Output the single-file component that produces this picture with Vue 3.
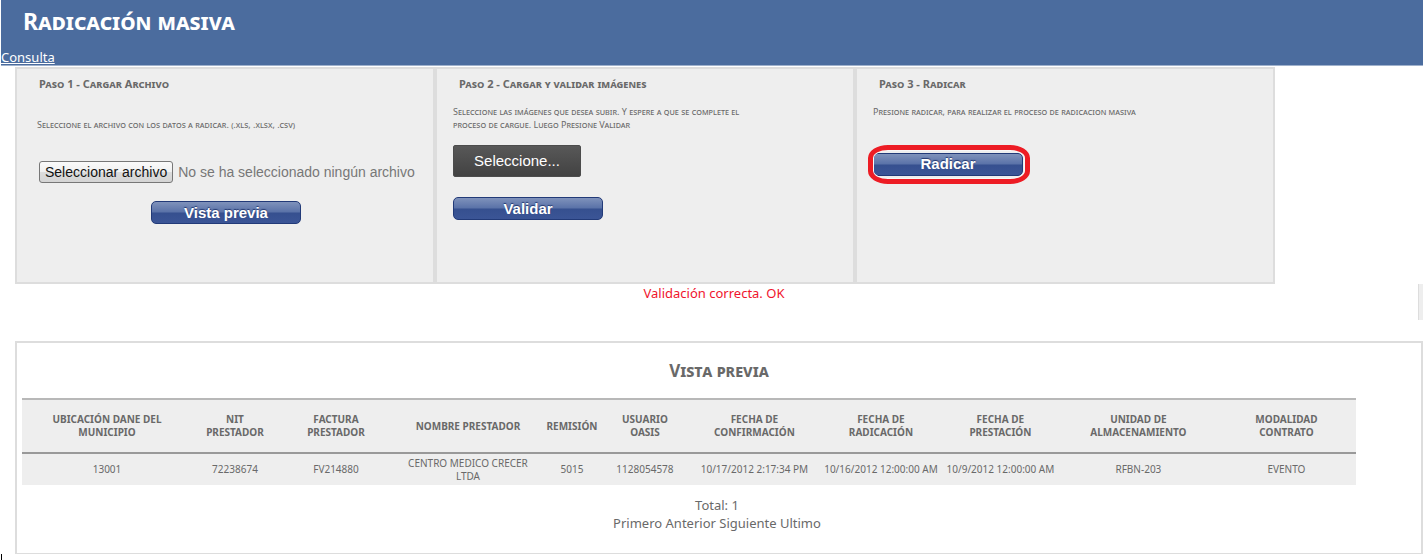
<script setup>
import { ref } from 'vue'

const fileName = ref('No se ha seleccionado ningún archivo')
function onFile(event) {
  const file = event.target.files[0]
  if (file) fileName.value = file.name
}

const columns = [
  { id: 'dane', label: 'UBICACIÓN DANE DEL\nMUNICIPIO', width: 170 },
  { id: 'nit', label: 'NIT\nPRESTADOR', width: 86 },
  { id: 'factura', label: 'FACTURA\nPRESTADOR', width: 116 },
  { id: 'nombre', label: 'NOMBRE PRESTADOR', width: 148 },
  { id: 'remision', label: 'REMISIÓN', width: 60 },
  { id: 'usuario', label: 'USUARIO\nOASIS', width: 86 },
  { id: 'confirmacion', label: 'FECHA DE\nCONFIRMACIÓN', width: 133 },
  { id: 'radicacion', label: 'FECHA DE\nRADICACIÓN', width: 120 },
  { id: 'prestacion', label: 'FECHA DE\nPRESTACIÓN', width: 119 },
  { id: 'unidad', label: 'UNIDAD DE\nALMACENAMIENTO', width: 157 },
  { id: 'modalidad', label: 'MODALIDAD\nCONTRATO', width: 139 }
]

const rows = [
  {
    dane: '13001',
    nit: '72238674',
    factura: 'FV214880',
    nombre: 'CENTRO MEDICO CRECER\nLTDA',
    remision: '5015',
    usuario: '1128054578',
    confirmacion: '10/17/2012 2:17:34 PM',
    radicacion: '10/16/2012 12:00:00 AM',
    prestacion: '10/9/2012 12:00:00 AM',
    unidad: 'RFBN-203',
    modalidad: 'EVENTO'
  }
]
</script>

<template>
  <div class="page">
    <header class="banner">
      <h1>Radicación masiva</h1>
      <a class="nav-link" href="#">Consulta</a>
    </header>

    <main>
      <div class="steps">
        <section class="step step-file">
          <h2>Paso 1 - Cargar Archivo</h2>
          <p>Seleccione el archivo con los datos a radicar. (.xls, .xlsx, .csv)</p>
          <div class="file-row">
            <input id="archivo" class="file-input" type="file" accept=".xls,.xlsx,.csv" @change="onFile" />
            <label class="file-button" for="archivo">Seleccionar archivo</label>
            <span class="file-name">{{ fileName }}</span>
          </div>
          <button class="action" type="button">Vista previa</button>
        </section>

        <section class="step">
          <h2>Paso 2 - Cargar y validar imágenes</h2>
          <p>Seleccione las imágenes que desea subir. Y espere a que se complete el proceso de cargue. Luego Presione Validar</p>
          <button class="pick" type="button">Seleccione...</button>
          <button class="action" type="button">Validar</button>
        </section>

        <section class="step step-send">
          <h2>Paso 3 - Radicar</h2>
          <p>Presione radicar, para realizar el proceso de radicacion masiva</p>
          <div class="marked">
            <button class="action" type="button">Radicar</button>
          </div>
        </section>
      </div>

      <div class="status-row">
        <p class="status" role="status">Validación correcta. OK</p>
        <div class="side-tab"></div>
      </div>

      <section class="preview">
        <h2>Vista previa</h2>
        <table>
          <colgroup>
            <col v-for="c in columns" :key="c.id" :style="{ width: c.width / 13.34 + '%' }" />
          </colgroup>
          <thead>
            <tr>
              <th v-for="c in columns" :key="c.id" scope="col">{{ c.label }}</th>
            </tr>
          </thead>
          <tbody>
            <tr v-for="row in rows" :key="row.factura">
              <td v-for="c in columns" :key="c.id">{{ row[c.id] }}</td>
            </tr>
          </tbody>
        </table>
        <div class="pager">
          <div>Total: 1</div>
          <nav aria-label="Paginación">
            <a href="#">Primero</a> <a href="#">Anterior</a> <a href="#">Siguiente</a> <a href="#">Ultimo</a>
          </nav>
        </div>
      </section>
      <div class="caret"></div>
    </main>
  </div>
</template>

<style>
body {
  background: #fff;
}
</style>

<style scoped>
.page {
  font-family: "Noto Sans", "Open Sans", sans-serif;
  color: #696969;
}
h1,
h2,
p {
  margin: 0;
}
.banner {
  display: flex;
  flex-direction: column;
  align-items: flex-start;
  margin-left: 1px;
  background: #4b6c9e;
  border-bottom: 1px solid #9fb1cc;
}
h1 {
  padding: 6px 22px 13px;
  font-size: 23px;
  line-height: 30px;
  font-weight: 700;
  font-variant: small-caps;
  color: #fff;
}
.nav-link {
  font-size: 13px;
  line-height: 16px;
  color: #fff;
}
.steps {
  display: grid;
  grid-template-columns: repeat(3, minmax(0, 1fr));
  margin: 1px 148px 0 15px;
}
.step {
  box-sizing: border-box;
  display: flex;
  flex-direction: column;
  align-items: flex-start;
  min-height: 217px;
  padding: 8px 80px 8px 16px;
  background: #eee;
  border: 2px solid #ddd;
}
.step h2 {
  padding-left: 6px;
  font-size: 11px;
  line-height: 14px;
  font-variant: small-caps;
}
.step p {
  margin: 14px 0;
  font-size: 9px;
  line-height: 13px;
  font-variant: small-caps;
}
.step-file {
  padding: 8px 18px 8px 20px;
}
.step-file h2 {
  padding-left: 2px;
}
.step-file p {
  margin: 27px 0 30px;
}
.file-row {
  display: flex;
  align-items: center;
  gap: 5px;
  margin: 0 0 18px 2px;
  font-family: "Liberation Sans", Arial, sans-serif;
  font-size: 14px;
  line-height: 18px;
}
.file-input {
  position: absolute;
  width: 1px;
  height: 1px;
  opacity: 0;
}
.file-button {
  padding: 1px 5px;
  color: #111;
  white-space: nowrap;
  background: linear-gradient(#fafafa, #f0f0f0 50%, #dcdcdc 51%, #d4d4d4);
  border: 1px solid #777;
  border-radius: 3px;
}
.file-name {
  white-space: nowrap;
  color: #777;
}
.action {
  width: 150px;
  height: 23px;
  padding: 0;
  font: bold 15px/20px "Liberation Sans", Arial, sans-serif;
  color: #fff;
  text-shadow: 0 -1px 1px #22376f;
  background: linear-gradient(#7f92bb, #5a72a8 48%, #36508f 52%, #3b5596);
  border: 1px solid #223a78;
  border-radius: 5px;
}
.step-file .action {
  align-self: center;
}
.pick {
  width: 128px;
  height: 32px;
  margin-bottom: 20px;
  padding: 0;
  font: 15px/30px "Liberation Sans", Arial, sans-serif;
  color: #fff;
  background: linear-gradient(#585858, #424242);
  border: 1px solid #4c4c4c;
  border-radius: 2px;
}
.step-send p {
  margin-bottom: 34px;
}
.marked {
  position: relative;
}
.marked::after {
  content: "";
  position: absolute;
  inset: -7px -7px -8px -5px;
  border: 5px solid #ed1c24;
  border-radius: 20px / 13px;
  box-shadow: inset 0 0 0 1px #f8f8f8;
  pointer-events: none;
}
.status-row {
  display: flex;
  justify-content: space-between;
}
.status {
  flex: 1;
  padding-left: 10px;
  font-size: 13px;
  line-height: 18px;
  text-align: center;
  color: #f0142d;
}
.side-tab {
  width: 4px;
  height: 36px;
  background: #eee;
  border-left: 1px solid #ddd;
}
.preview {
  box-sizing: border-box;
  min-height: 213px;
  margin: 21px 0 0 15px;
  padding: 15px 65px 0 5px;
  border: 2px solid #ddd;
  border-bottom-width: 1px;
}
.preview h2 {
  margin: 0 -60px 14px 0;
  font-size: 17px;
  line-height: 26px;
  text-align: center;
  font-variant: small-caps;
}
table {
  width: 100%;
  table-layout: fixed;
  border-collapse: collapse;
  font-size: 10px;
  line-height: 13px;
  text-align: center;
  background: #eee;
}
th,
td {
  padding: 0;
  white-space: pre-line;
}
th {
  height: 52px;
  border-top: 2px solid #b8b8b8;
  border-bottom: 2px solid #999;
}
td {
  height: 31px;
}
.pager {
  margin: 11px -56px 0 0;
  font-size: 13px;
  line-height: 18px;
  text-align: center;
}
.pager a {
  color: inherit;
  text-decoration: none;
}
.caret {
  width: 1px;
  height: 6px;
  margin-left: 1px;
  background: #000;
}
</style>
